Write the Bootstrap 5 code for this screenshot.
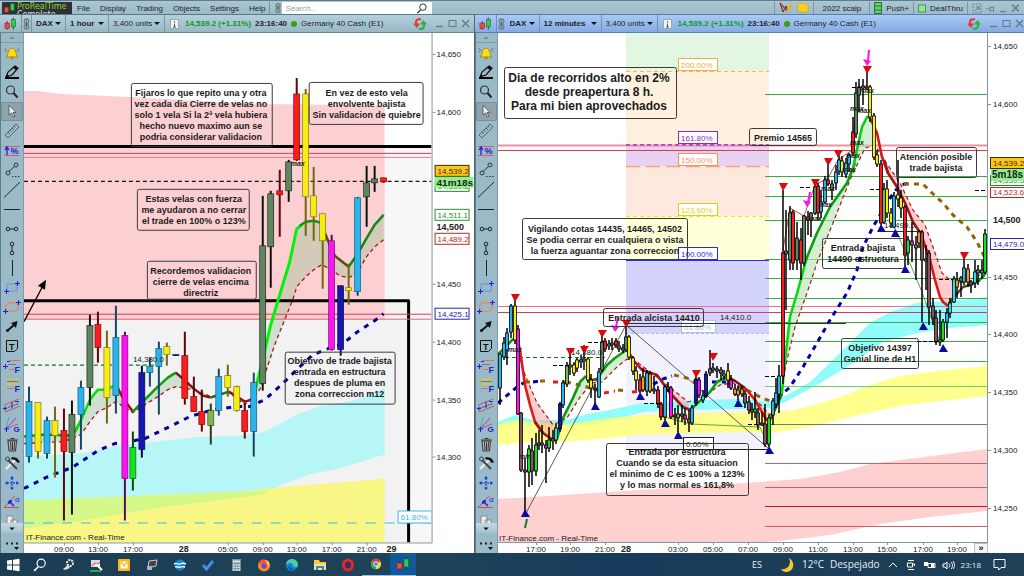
<!DOCTYPE html>
<html lang="es">
<head>
<meta charset="utf-8">
<meta name="viewport" content="width=device-width, initial-scale=1">
<title>ProRealTime</title>
<link href="https://cdn.jsdelivr.net/npm/bootstrap@5.3.0/dist/css/bootstrap.min.css" rel="stylesheet">
<style>
:root{--steel:#9fbdcb;--ink:#1d2429}
body{height:100vh;font:8px/10px "Liberation Sans",Arial,sans-serif;color:var(--ink);background:#fff;overflow:hidden}
button,select,input{font:inherit;color:inherit;border:0;background:none;padding:0;margin:0}
a{color:inherit;text-decoration:none}
svg{display:block}
.fit{min-height:0}
.appbar{height:14px;background:linear-gradient(#5f7d8b 0 1px,#a9c6d2 1px,#9dbbc8);padding-top:2px}
.appbar-brand{width:70px;height:12px;margin-left:2px;background:#2c3237;color:#8ed622;font:8px/9px "DejaVu Sans",sans-serif}
.brand-sub{color:#dfe6ea;line-height:8px}
.appbar nav{column-gap:10px;margin-left:5px}
.appbar nav a,.appbar-item{line-height:14px}
.vline{width:1px;align-self:stretch;background:#7995a3}
.search-box{width:150px;height:12px;background:#fff}
.search-box input{width:134px;height:12px;padding-left:3px;font-style:italic}
.search-box input::placeholder{color:#9a9a9a;opacity:1}
.win-left{flex:474 1 0}
.win-right{flex:550 1 0;border-left:1px solid #4d6573}
.titlebar{height:19px;background:linear-gradient(#b4d0dc,#98b7c5);border-bottom:1px solid #6d8794;border-top:1px solid #5d7683}
.win-right .titlebar{background:linear-gradient(#a9caf6,#86abe0);border-color:#5a7fae}
.win-right .vline{background:#6f92c4}
.info-mark{margin:0 5px}
.pick{appearance:none;height:17px;padding-left:4px;background:url("data:image/svg+xml,%3Csvg xmlns='http://www.w3.org/2000/svg' width='6' height='3'%3E%3Cpath d='M0 0h6L3 3z' fill='%23111'/%3E%3C/svg%3E") no-repeat right 4px center}
.pick-sym{width:33px}.pick-tf{width:42px}.pick-tf-wide{width:61px}.pick-units{width:55px}
.quote{color:#0b9a1c}
.dot-live{width:6px;height:6px;border-radius:50%;background:#3f9c10}
.tools{width:24px;background:#9bbac8;border-right:1px solid #7f9cab;border-left:1px solid #5f7a88}
.win-right .tools{width:23px}
.tools button{width:100%;min-height:0}
.tools .tool{flex:39 1 0}
.tools .tool-cut{flex:22 1 0;overflow:hidden}
.tools .tool-on{background:#8fa3ad;box-shadow:inset 0 0 0 1px #75909e;border-radius:2px}
.tools svg{width:18px;height:18px;margin:auto}
.tools .cap{height:10px;border-bottom:1px solid #7f9cab}
.tools .more{height:10px;background:linear-gradient(#c4d9e2,#a5c2cf)}
.tools .cap svg,.tools .more svg{height:9px}
.tools .dots{height:20px}
.chart{width:100%;height:100%}
.chart text{fill:#222;font-size:8px}
.chart .note text{font-size:9px;font-weight:700;text-anchor:middle;fill:#1c1c1c}
.chart .note-lg text{font-size:12px}
.chart .note rect{fill:none;stroke:#3b3b3b}
.chart .major{font-size:9px;font-weight:700}
.chart .mark-txt{font-style:italic;font-weight:700;font-size:7px;text-anchor:middle}
.chart .count{font-size:10px;font-weight:700}
.chart .mid{text-anchor:middle}
.taskbar{height:23px;background:linear-gradient(90deg,#1b3d54,#1f4459 40%,#173b5b 60%,#1f4055);color:#e8eef2;font:10px/23px "Open Sans",sans-serif}
.taskbar button{width:28px;height:23px}
.taskbar .start{width:26px}
.taskbar svg{margin-left:auto;margin-right:auto}
.taskbar .running{border-bottom:1px solid #8fc3ea}
.taskbar .active{width:26px;background:#0f5a9b;border-bottom:1px solid #8fc3ea}
.tray{padding-right:18px}
.tray .lang{font-size:9px;margin-right:18px}
.tray .near{margin-right:6px}
.tray .clock{font-size:8px;margin-right:12px}
</style>
</head>
<body class="d-flex flex-column">

<svg width="0" height="0" class="position-absolute" aria-hidden="true">
 <defs>
 <symbol id="candles" viewBox="0 0 14 14"><path d="M3.500 4v9M10 0v13" stroke="#333"/><rect x="1" y="6" width="5" height="6" fill="#e8494b" stroke="#8c2020" stroke-width=".6"/><rect x="8" y="2" width="4.500" height="8" fill="#36c94c" stroke="#176b23" stroke-width=".6"/></symbol>
 <symbol id="chain" viewBox="0 0 10 14"><g fill="none" stroke="#6e8087" stroke-width="1.600"><circle cx="5" cy="4" r="2.500"/><circle cx="5" cy="10" r="2.500"/></g><path d="M5 3v8" stroke="#55666d"/></symbol>
 <symbol id="info" viewBox="0 0 10 10"><rect x=".5" y=".5" width="8" height="9" fill="#f3f3f3" stroke="#9aa"/><path d="M4.500 2v1.500M4.500 4.500V8M3 8h3" stroke="#555"/></symbol>
 <symbol id="refresh" viewBox="0 0 14 14"><path d="M8 2.500C4 1 2 4 3.500 8" fill="none" stroke="#e8383b" stroke-width="2.200"/><path d="M0 6.500h7L4 11z" fill="#e8383b"/><path d="M6 11.500C10 13 12 10 10.500 6" fill="none" stroke="#27b53a" stroke-width="2.200"/><path d="M7 7.500h7L10.500 3z" fill="#27b53a"/></symbol>
 <symbol id="wmin" viewBox="0 0 9 9"><path d="M1 7.500h7" stroke="#5e7a88" stroke-width="1.300"/></symbol>
 <symbol id="wmax" viewBox="0 0 9 9"><rect x="1" y="1.500" width="7" height="6" fill="none" stroke="#5e7a88"/></symbol>
 <symbol id="wclose" viewBox="0 0 9 9"><path d="M1 1l7 7M8 1L1 8" stroke="#5e7a88" stroke-width="1.300"/></symbol>
 <symbol id="lens" viewBox="0 0 12 12"><circle cx="7" cy="4.500" r="3.500" fill="none" stroke="currentColor"/><path d="M4.500 7.500L1 11" stroke="currentColor" stroke-width="1.400"/></symbol>

 <symbol id="t-bell" viewBox="0 0 18 18"><path d="M3 13c3-2 1-8 6-9 5 1 3 7 6 9z" fill="#f7dc1b" stroke="#9c7b00" stroke-width=".8"/><circle cx="9" cy="14" r="1.500" fill="#b08c00"/><path d="M2 4l2 3M1.500 7l1 1M16 4l-2 3M16.500 7l-1 1" stroke="#66747a"/></symbol>
 <symbol id="t-pencil" viewBox="0 0 18 18"><path d="M3 14l2-5 7-6 3 2-6 7z" fill="none" stroke="#111" stroke-width="1.200"/><path d="M12 3l3 2-2 2-3-2zM3 14l1-3 2 2z" fill="#111"/><path d="M2 15h14" stroke="#000" stroke-width="2"/></symbol>
 <symbol id="t-zoom" viewBox="0 0 18 18"><circle cx="7.500" cy="7" r="4" fill="none" stroke="#333" stroke-width="1.200"/><path d="M10.500 10l4 4.500" stroke="#222" stroke-width="2"/></symbol>
 <symbol id="t-pointer" viewBox="0 0 18 18"><path d="M6 3v10l2.500-2 2 4 1.500-.8-2-3.700h3z" fill="#eee" stroke="#555" stroke-width=".9"/></symbol>
 <symbol id="t-ruler" viewBox="0 0 18 18"><path d="M2 13L13 2l3 3L5 16z" fill="none" stroke="#59666c"/><path d="M5 10l2 2M7 8l1.500 1.500M9 6l2 2M11 4l1.500 1.500" stroke="#59666c"/></symbol>
 <symbol id="t-pct" viewBox="0 0 18 18"><path d="M1 4.500h16M1 13.500h16" stroke="#e25960"/><path d="M4 13V6M2 8l2-3 2 3" stroke="#1a1fe0" fill="none" stroke-width="1.300"/><text x="7.500" y="12" font-size="9" font-weight="700" fill="#1a1fe0">%</text></symbol>
 <symbol id="t-segdot" viewBox="0 0 18 18"><g fill="none" stroke="#333"><circle cx="5" cy="12" r="2"/><circle cx="13" cy="4" r="2"/><path d="M6 10.500L11.500 5.500"/></g><path d="M9 15.500h8" stroke="#333" stroke-dasharray="1.500 1.500"/></symbol>
 <symbol id="t-slash" viewBox="0 0 18 18"><path d="M1 16.500L17 1" stroke="#222"/></symbol>
 <symbol id="t-hline" viewBox="0 0 18 18"><path d="M1 9.500h16" stroke="#222"/></symbol>
 <symbol id="t-hseg" viewBox="0 0 18 18"><g fill="none" stroke="#222"><circle cx="5" cy="9" r="1.800"/><circle cx="13" cy="9" r="1.800"/><path d="M7 9h4"/></g></symbol>
 <symbol id="t-vseg" viewBox="0 0 18 18"><g fill="none" stroke="#222"><circle cx="9" cy="5" r="1.800"/><circle cx="9" cy="14" r="1.800"/><path d="M9 7v5"/></g></symbol>
 <symbol id="t-vline" viewBox="0 0 18 18"><path d="M9.500 1v16" stroke="#222"/></symbol>
 <symbol id="t-rect" viewBox="0 0 18 18"><rect x="4" y="6" width="10" height="7" fill="none" stroke="#6d8fe0"/><path d="M1 13.500h5M3.500 11v5M12 5.500h5M14.500 3v5" stroke="#1a1fe0"/></symbol>
 <symbol id="t-ellipse" viewBox="0 0 18 18"><ellipse cx="9" cy="9" rx="6.500" ry="4.500" fill="none" stroke="#e08b5a" stroke-width="1.300"/><path d="M0 13.500h5M2.500 11v5M13 4.500h5M15.500 2v5" stroke="#1a1fe0"/></symbol>
 <symbol id="t-arrow" viewBox="0 0 18 18"><path d="M4 14l7-6" stroke="#111" stroke-width="2"/><path d="M14.500 4l-1.500 7-5-5z" fill="#111"/><circle cx="4.500" cy="13.500" r="1.500" fill="#111"/></symbol>
 <symbol id="t-text" viewBox="0 0 18 18"><path d="M3.500 3.500h11v8l-3 3h-8z" fill="none" stroke="#111"/><text x="6" y="12.500" font-size="9" font-weight="700" fill="#111">T</text></symbol>
 <symbol id="t-fib" viewBox="0 0 18 18"><path d="M6 3.500h11M6 12.500h5" stroke="#e66"/><path d="M5 7.500h8" stroke="#777"/><path d="M0 9.500h5M2.500 7v5M4 4.500h3" stroke="#1a1fe0"/><text x="11.500" y="16" font-size="9" font-weight="700" fill="#1a1fe0">F</text></symbol>
 <symbol id="t-fib2" viewBox="0 0 18 18"><path d="M4 3.500h11M4 8h11" stroke="#e3c33a" stroke-width="1.300"/><path d="M4 5.500h11" stroke="#777"/><path d="M4 12.500h7" stroke="#e66"/><text x="11.500" y="16" font-size="9" font-weight="700" fill="#1a1fe0">F</text></symbol>
 <symbol id="t-channel" viewBox="0 0 18 18"><path d="M1 9l15-6M2 16l15-6" stroke="#c55"/><path d="M2 12.500l14-5" stroke="#444" stroke-dasharray="2 1"/><path d="M0 12.500h4M2 10.500v4M9 6v6M12 5.500h4" stroke="#1a1fe0"/></symbol>
 <symbol id="t-gann" viewBox="0 0 18 18"><path d="M3 14L6 2" stroke="#5a9"/><path d="M3 14L13 3" stroke="#a3c"/><path d="M3 14l12-5" stroke="#c55"/><path d="M1 14h5M3.500 12v5" stroke="#1a1fe0"/><text x="10.500" y="16.500" font-size="8" font-weight="700" fill="#1a1fe0">G</text></symbol>
 <symbol id="t-trash" viewBox="0 0 18 18"><path d="M5 6h8.500l-1 10H6z" fill="#bbb" stroke="#333"/><path d="M4 5h11M7.500 3.500h4M7.500 7l.5 8M9.500 7v8M11.500 7L11 15" stroke="#333"/></symbol>
 <symbol id="t-wrench" viewBox="0 0 18 18"><path d="M3 15L12 6" stroke="#eee" stroke-width="2.400"/><path d="M9 3l5 1 3 4-2 1-3-3-4-1z" fill="#111"/><path d="M5 6l9 9" stroke="#444" stroke-width="2"/><circle cx="4.500" cy="5" r="2" fill="none" stroke="#444"/></symbol>
 <symbol id="t-move" viewBox="0 0 18 18"><path d="M9 4v10M4 9h10" stroke="#1d5ad0" stroke-dasharray="2 1" stroke-width="1.500"/><path d="M9 2l2 2.500H7zM9 16l2-2.500H7zM2 9l2.500-2v4zM16 9l-2.500-2v4z" fill="#1a2fe0"/></symbol>
 <symbol id="t-angle" viewBox="0 0 18 18"><path d="M16 14.500H1L12 3" fill="none" stroke="#d4494d"/><path d="M6 8l5 5M6 8v3M6 8h3" stroke="#1a1fe0" stroke-width="1.500"/><text x="12" y="9" font-size="8" fill="#1a1fe0">α</text></symbol>
 <symbol id="t-copy" viewBox="0 0 18 18"><path d="M4 4h6v9H4zM8 8h6v9H8z" fill="#eee" stroke="#888"/></symbol>
 </defs>
</svg>

<header class="appbar d-flex align-items-start overflow-hidden flex-shrink-0">
 <div class="appbar-brand d-flex overflow-hidden flex-shrink-0">
  <svg width="15" height="12" class="flex-shrink-0"><use href="#candles"/></svg>
  <div><div>ProRealTime</div><div class="brand-sub">Complete</div></div>
 </div>
 <nav class="d-flex"><a href="#">File</a><a href="#">Display</a><a href="#">Trading</a><a href="#">Objects</a><a href="#">Settings</a><a href="#">Help</a></nav>
 <div class="vline ms-1 me-1"></div>
 <svg width="8" height="12"><use href="#chain"/></svg>
 <label class="search-box d-flex align-items-center"><input type="text" placeholder="Search..." aria-label="Search"><svg width="12" height="11"><use href="#lens"/></svg></label>
 <div class="ms-auto d-flex align-self-stretch gap-1">
  <div class="vline"></div>
  <svg width="14" height="12" viewBox="0 0 14 12"><path d="M1 1l3 9 3-6 2 6" fill="none" stroke="#333"/><path d="M1 1l8 9" stroke="#e22" stroke-width="1.500"/><path d="M13 1l-5 9" stroke="#e8b62b" stroke-width="2.500"/></svg>
  <svg width="12" height="12" viewBox="0 0 12 12"><path d="M1 2c4-2 6 1 10 0v8c-4 1-6-1-10 0z" fill="#fc2" stroke="#c90" stroke-width=".5"/></svg>
  <div class="vline"></div><a href="#" class="appbar-item mx-1">2022 scalp</a><div class="vline"></div>
  <svg width="8" height="12" viewBox="0 0 8 12"><rect x=".5" y=".5" width="7" height="11" fill="#5fd06a" stroke="#247a30"/><path d="M0 4h8M0 8h8" stroke="#247a30"/></svg>
  <a href="#" class="appbar-item">Push+</a><div class="vline"></div>
  <svg width="8" height="12" viewBox="0 0 8 12"><rect x=".5" y="3" width="7" height="7" fill="#8de98a" stroke="#4a9650"/></svg>
  <a href="#" class="appbar-item">DealThru</a><div class="vline"></div>
  <svg width="10" height="12" viewBox="0 0 10 12"><rect x="1" y="2" width="8" height="9" fill="none" stroke="#6f8893" stroke-dasharray="2 1"/><path d="M3 9l4-4M4 5h3v3" stroke="#5c7580" fill="none"/></svg>
  <svg width="9" height="12" viewBox="0 0 9 12"><path d="M0 7h4M4 4v6M7.500 4v6M4 5.500h3.500v3H4" stroke="#6f8893" fill="none"/></svg>
  <svg width="8" height="14"><use href="#wmin"/></svg><svg width="9" height="12" class="me-1"><use href="#wclose"/></svg>
 </div>
</header>

<main class="d-flex flex-grow-1 fit">
 <section class="win-left d-flex flex-column" aria-label="DAX 1 hour">
  <div class="titlebar d-flex align-items-center flex-shrink-0">
   <svg width="13" height="14" class="mx-1 flex-shrink-0"><use href="#candles"/></svg><div class="vline"></div>
   <svg width="9" height="14"><use href="#chain"/></svg><div class="vline"></div>
   <select class="pick pick-sym fw-bold" aria-label="Symbol"><option>DAX</option></select><div class="vline"></div>
   <select class="pick pick-tf fw-bold" aria-label="Timeframe"><option>1 hour</option></select><div class="vline"></div>
   <select class="pick pick-units" aria-label="Units"><option>3,400 units</option></select><div class="vline"></div>
   <svg width="10" height="10" class="info-mark"><use href="#info"/></svg>
   <b class="quote">14,539.2 (+1.31%)</b><b class="ms-1">23:16:40</b><i class="dot-live mx-1"></i><span>Germany 40 Cash (E1)</span>
   <div class="ms-auto d-flex align-items-center gap-1 pe-1"><svg width="14" height="14" class="me-1"><use href="#refresh"/></svg>
   <button aria-label="Minimize"><svg width="9" height="9"><use href="#wmin"/></svg></button><button aria-label="Maximize"><svg width="9" height="9"><use href="#wmax"/></svg></button><button aria-label="Close"><svg width="9" height="9"><use href="#wclose"/></svg></button></div>
  </div>
  <div class="d-flex flex-grow-1 fit">
   <div class="tools d-flex flex-column flex-shrink-0"></div>
   <div class="flex-grow-1"><svg class="chart" id="chartA" viewBox="24 33 450 520" preserveAspectRatio="xMinYMin meet"></svg></div>
  </div>
 </section>
 <section class="win-right d-flex flex-column" aria-label="DAX 12 minutes">
  <div class="titlebar d-flex align-items-center flex-shrink-0">
   <svg width="13" height="14" class="mx-1 flex-shrink-0"><use href="#candles"/></svg><div class="vline"></div>
   <svg width="9" height="14"><use href="#chain"/></svg>
   <select class="pick pick-sym fw-bold" aria-label="Symbol"><option>DAX</option></select><div class="vline"></div>
   <select class="pick pick-tf-wide fw-bold" aria-label="Timeframe"><option>12 minutes</option></select><div class="vline"></div>
   <select class="pick pick-units" aria-label="Units"><option>3,400 units</option></select><div class="vline"></div>
   <svg width="10" height="10" class="info-mark"><use href="#info"/></svg>
   <b class="quote">14,539.2 (+1.31%)</b><b class="ms-1">23:16:40</b><i class="dot-live mx-1"></i><span>Germany 40 Cash (E1)</span>
   <div class="ms-auto d-flex align-items-center gap-1"><svg width="14" height="14" class="me-1"><use href="#refresh"/></svg>
   <button aria-label="Minimize"><svg width="9" height="9"><use href="#wmin"/></svg></button><button aria-label="Maximize"><svg width="9" height="9"><use href="#wmax"/></svg></button><button aria-label="Close"><svg width="9" height="9"><use href="#wclose"/></svg></button></div>
  </div>
  <div class="d-flex flex-grow-1 fit">
   <div class="tools d-flex flex-column flex-shrink-0"></div>
   <div class="flex-grow-1"><svg class="chart" id="chartB" viewBox="498 33 526 520" preserveAspectRatio="xMinYMin meet"></svg></div>
  </div>
 </section>
</main>

<footer class="taskbar d-flex align-items-center flex-shrink-0">
 <button class="start" aria-label="Start"><svg width="14" height="14" viewBox="0 0 14 14"><path d="M1 2.500l5-.7v4.700H1zM7 1.700l6.500-1v5.800H7zM1 7.500h5v4.700l-5-.7zM7 7.500h6.500v5.800L7 12.300z" fill="#fff"/></svg></button>
 <button aria-label="Search"><svg width="14" height="14" class="text-white"><use href="#lens"/></svg></button>
 <button aria-label="Settings"><svg width="14" height="14" viewBox="0 0 14 14"><circle cx="9" cy="5" r="3" fill="none" stroke="#eee" stroke-width="2" stroke-dasharray="2 1"/><path d="M2 11l5-4 2 3-5 2z" fill="#ddd"/></svg></button>
 <button aria-label="Tools"><svg width="14" height="14" viewBox="0 0 14 14"><path d="M2 2h9v7H2z" fill="#dde"/><path d="M3 8c3-6 5 0 8-4" stroke="#d33" fill="none"/><path d="M7 6l6 6" stroke="#fff" stroke-width="2"/><path d="M1 13h11" stroke="#25b531" stroke-width="2"/></svg></button>
 <button aria-label="Mail"><svg width="14" height="14" viewBox="0 0 14 14"><rect x="1" y="1" width="12" height="12" rx="1" fill="#fdb813"/><path d="M3.500 3.500h7v7h-7z" fill="#fff"/><path d="M4 4l4 4.500M10 4L7 8" stroke="#fdb813" stroke-width="1.200"/></svg></button>
 <button aria-label="Photos"><svg width="14" height="14" viewBox="0 0 14 14"><path d="M4 3l8-1-1 6-8 2z" fill="#444" stroke="#ccc"/><path d="M2 8h5v4H2z" fill="#b9a6c8"/></svg></button>
 <button aria-label="OpenOffice"><svg width="14" height="14" viewBox="0 0 14 14"><circle cx="7" cy="7" r="5.500" fill="#1583cf"/><path d="M1 6c3-2 4 1 6 0s4-1 6 0M2 9c3-1 4 1 6 0s3 0 4 0" stroke="#fff" fill="none" stroke-width="1.300"/></svg></button>
 <button aria-label="Tasks"><svg width="14" height="14" viewBox="0 0 14 14"><path d="M2 7l3.500 4L12 3" fill="none" stroke="#3f8fe8" stroke-width="3"/></svg></button>
 <button aria-label="Calculator"><svg width="14" height="14" viewBox="0 0 14 14"><rect x="3" y="1" width="9" height="12" fill="#7a8f9c"/><path d="M4 3.500h7" stroke="#cfe6f4" stroke-width="2"/><path d="M4 7h7M4 9.500h7M4 12h7" stroke="#dfe8ee" stroke-dasharray="1.800 .8" stroke-width="1.500"/></svg></button>
 <button aria-label="Firefox"><svg width="14" height="14" viewBox="0 0 14 14"><circle cx="7" cy="7.500" r="6" fill="#ff8a1e"/><path d="M1 6c2-4 3-3 4-5 1 2 7 1 8 6-1-1-2-3-4-2z" fill="#ff4f3a"/><circle cx="7" cy="8" r="2.700" fill="#7b43d6"/><path d="M9 2c3 1 4 4 3 7-1-3-2-3-3-7" fill="#ffd43a"/></svg></button>
 <button aria-label="Edge"><svg width="14" height="14" viewBox="0 0 14 14"><circle cx="7" cy="7" r="6" fill="#1787d8"/><path d="M1 7c0-8 12-8 12 0 0 3-5 2-5 0 0-3-5-3-7 0z" fill="#43d1a0"/><path d="M5 7c0 4 4 5 7 3-2 4-8 3-9-1z" fill="#0b5aa8"/></svg></button>
 <button aria-label="Explorer"><svg width="14" height="14" viewBox="0 0 14 14"><path d="M1 2h5l1 2h6v8H1z" fill="#f9c940"/><path d="M1 6h12v6H1z" fill="#fde08a"/><path d="M3 8h8v4H9v-2H5v2H3z" fill="#2b8ad4"/></svg></button>
 <button aria-label="Opera"><svg width="14" height="14" viewBox="0 0 14 14"><ellipse cx="7" cy="7" rx="4.500" ry="5" fill="#1b3d54" stroke="#f0202c" stroke-width="3"/></svg></button>
 <button class="running" aria-label="Chrome"><svg width="12" height="12" viewBox="0 0 14 14"><circle cx="7" cy="7" r="6" fill="#ffcd42"/><path d="M7 7L1.800 4A6 6 0 0 1 12.200 4z" fill="#e33b2e"/><path d="M7 7v6A6 6 0 0 1 1.800 4z" fill="#2fa24c"/><circle cx="7" cy="7" r="2.700" fill="#3f80ee" stroke="#fff"/></svg></button>
 <button class="active" aria-label="ProRealTime"><svg width="14" height="14"><use href="#candles"/></svg></button>
 <div class="tray ms-auto d-flex align-items-center">
  <span class="lang">ES</span>
  <div class="near"><svg width="16" height="16" viewBox="0 0 16 16"><path d="M9 1c7 4 5 14-3 14-2 0-4-1-5-3 6 1 11-4 8-11z" fill="#fcc42f"/></svg></div>
  <span class="near">12°C</span><span class="me-2">Despejado</span>
  <div class="me-2"><svg width="10" height="8" viewBox="0 0 10 8"><path d="M1 6l4-4 4 4" fill="none" stroke="#fff"/></svg></div>
  <div class="me-2"><svg width="10" height="12" viewBox="0 0 10 12"><path d="M2 1.500h6M2 10.500h6M1.500 4h5v4h-5zM6.500 5h2v2" fill="none" stroke="#fff"/></svg></div>
  <div class="near"><svg width="12" height="10" viewBox="0 0 12 10"><path d="M4 3.500h7v4H4z" fill="none" stroke="#fff"/><path d="M0 2h4v4H0zM7 4h3v3H7z" fill="#fff"/></svg></div>
  <div class="near"><svg width="13" height="10" viewBox="0 0 13 10"><path d="M1 4h2l2-2v7L3 7H1zM7 3.500c1 1 1 3 0 4M9 2c2 2 2 5 0 7M11 1c2 3 2 6 0 8" fill="none" stroke="#fff"/></svg></div>
  <time class="clock">23:18</time>
  <svg width="13" height="13" viewBox="0 0 13 13"><path d="M1 1.500h11v8H8L6 12 5 9.500H1z" fill="none" stroke="#fff"/></svg>
 </div>
</footer>

<script src="https://cdn.jsdelivr.net/npm/bootstrap@5.3.0/dist/js/bootstrap.bundle.min.js"></script>
<script>
/* drawing tool strips */
const TOOLS = 'bell pencil zoom pointer ruler pct segdot slash hline hseg vseg vline rect ellipse arrow text fib fib2 channel gann trash wrench move angle copy'.split(' ');
document.querySelectorAll('.tools').forEach(bar => {
  bar.innerHTML = '<button class="cap" aria-label="Scroll up"><svg viewBox="0 0 18 10"><path d="M6 6.500L9 4l3 2.500z" fill="#6d8390"/></svg></button>' +
    TOOLS.map(t => `<button class="${t === 'copy' ? 'tool-cut' : 'tool'}${t === 'pointer' ? ' tool-on' : ''}" aria-label="${t}"><svg><use href="#t-${t}"/></svg></button>`).join('') +
    '<button class="more" aria-label="Scroll down"><svg viewBox="0 0 18 10"><path d="M6 4h6L9 7z" fill="#111"/></svg></button>' +
    '<button class="dots" aria-label="More"><svg viewBox="0 0 18 18"><path d="M3 9.500h12" stroke="#222" stroke-width="2" stroke-dasharray="2 3"/><path d="M11 13h5l-2.500 3z" fill="#111"/></svg></button>';
});

/* drawing helpers */
const poly = (pts, fill, o = 1) => `<polygon points="${pts}" fill="${fill}" opacity="${o}"/>`;
const path = (pts, c, w = 1, d = '') => `<polyline points="${pts}" fill="none" stroke="${c}" stroke-width="${w}" stroke-linejoin="round" ${d ? `stroke-dasharray="${d}"` : ''}/>`;
const hl = (x1, x2, y, c, w = 1, d = '') => path(`${x1},${y} ${x2},${y}`, c, w, d);
const rect = (x, y, w, h, f, s = 'none') => `<rect x="${x}" y="${y}" width="${w}" height="${h}" fill="${f}" stroke="${s}"/>`;
const txt = (x, y, s, cls = '', fill = '') => `<text x="${x}" y="${y}" class="${cls}" ${fill ? `style="fill:${fill}"` : ''}>${s}</text>`;
const tag = (x, y, w, h, s, c, bg = '#fff') => rect(x + .5, y + .5, w, h, bg, c) + txt(x + 3, y + h - 2, s, '', c);
const note = (x, y, w, h, cx, base, lines, step = 11, cls = '') =>
  `<g class="note ${cls}"><rect x="${x + .5}" y="${y + .5}" width="${w}" height="${h}" rx="2"/>${lines.map((l, i) => `<text x="${cx}" y="${base + i * step}">${l}</text>`).join('')}</g>`;
const COL = { b: ['#29b4ec', '#0f4a66'], y: ['#f6ee10', '#6f6a10'], r: ['#fb1c1c', '#5d0808'], d: ['#5f8562', '#0c150c'], m: ['#fb14f0', '#5e085c'],
  g: ['#14e41c', '#0a4a0c'], n: ['#1616b0', '#06063c'], l: ['#7db84a', '#26401a'], w: ['#8a5560', '#000'], o: ['#f39a1c', '#000'], c: ['#18e4f4', '#000'] };
/* candle records: x colour bodyTop bodyBottom wickTop wickBottom */
const candles = (s, w, wick, mono) => s.trim().split(/\s*;\s*/).filter(Boolean).map(r => {
  const [x, k, t, b, wt, wb] = r.split(' '), [f, dk] = COL[k];
  return path(`${x},${wt} ${x},${wb}`, mono ? '#000' : dk, wick) +
    `<rect x="${x - w / 2}" y="${t}" width="${w}" height="${Math.max(1, b - t)}" fill="${f}" stroke="${mono ? '#000' : dk}" stroke-width="${mono ? .8 : .6}"/>`;
}).join('');

/* 1 hour chart */
let a = rect(24, 33, 408, 510, '#fff') + rect(24, 147, 408, 396, '#f7f7f7') + rect(24, 301, 385, 242, '#f2f2f2');
a += poly('24,91 38,91 62,94 130,97 200,101 260,104 345,105 385,106 385,320 24,320', '#fcd0d2');
a += poly('24,457 80,454 120,446 150,443 190,438 240,436 262,433 283,423 297,415 320,407 350,402 370,396 385,388 385,455 340,469 310,475 285,484 265,494 240,498 160,508 90,520 24,529', '#b6f6f6');
a += poly('24,501 100,498 240,492 300,486 340,483 385,479 385,543 24,543', '#f8f684');
a += poly('24,501 100,498 240,492 270,491 262,495 240,498 160,508 90,520 24,529', '#d4f888');
a += hl(24, 432, 523.5, '#40b8e8', 1, '10 9');
const aFast = '24,437 45,435 68,436 75,432 81,421 90,400 98,390 107,390 116,385 124,400 133,412 145,400 158,387 168,378 176,373 184,380 194,389 203,396 211,398 220,395 229,392 237,397 245,402 252,400 256,388 263,360 271,325 283,285 290,262 297,229 306,222 314,221 321,223 330,245 335,256 349,267 358,254 366,240 375,225 384,215';
const aSlow = '24,444 64,442 81,435 90,422 98,412 107,408 116,402 133,413 145,405 158,397 168,390 176,387 194,390 211,397 229,393 245,405 260,390 266,372 275,345 285,320 293,300 297,287 306,277 314,270 322,265 332,270 340,276 349,278 358,273 366,258 375,247 384,240';
a += poly(aFast + ' ' + aSlow.split(' ').reverse().join(' '), '#8cc08c', .35);
a += hl(24, 432, 146.5, '#000', 3) + hl(24, 432, 153.5, '#d83a58') + hl(24, 432, 157.5, '#e87a8c') + hl(24, 432, 181.5, '#111', 1.4, '4 3');
a += path('24,301 409,301 409,543', '#000', 3) + hl(24, 432, 314.5, '#d83a58') + hl(24, 432, 319.5, '#e0657c') + hl(24, 164, 365.5, '#0a7d14', 1.4, '4 3');
a += path('24,322 43,286', '#000', 1.3) + poly('46,280 45,290 38,286', '#000');
a += path(aSlow, '#a31818', 1.3, '4 3');
a += path('24,489 48,477 72,468 98,451 115,444 124,443 145,439 170,427 190,417 210,411 235,407 250,407 265,400 283,384 297,370 312,356 325,350 342,345 358,332 375,321 384,314', '#00009c', 3, '5 6');
a += path('24,437 45,435 68,436 75,432 81,421', '#109c14', 2.5) + path('75,432 81,421 90,400 98,390 107,390 116,385', '#06e20a', 2.5) + path('116,385 124,400 133,412', '#a00c18', 2.5) +
  path('133,412 145,400 158,387 168,378 176,373', '#0e9c14', 2.5) + path('176,373 184,380 194,389 203,396 211,398', '#7c1414', 2.5) + path('211,398 220,395 229,392', '#16761a', 2.5) + path('229,392 237,397 245,402 252,400', '#8c1414', 2.5) +
  path('254,396 258,380 263,360 271,325 283,285 290,262 297,229 302,225', '#06f00a', 3) + path('300,226 306,222 314,221 321,223', '#0e9414', 2.5) + path('321,223 330,245 335,256 349,267', '#5a4a10', 2.5) + path('349,267 358,254 366,240 375,225 384,215', '#0e8a14', 2.5);
a += candles(`29 b 402 457 387 463;38 y 403 452 403 459;47 b 421 454 417 459;55 y 421 436 407 478;64 r 431 452 409 521;72 d 415 453 401 515;81 b 388 415 381 450;90 d 326 388 315 406;98 r 325 348 312 363;107 y 348 398 331 424;116 b 338 396 306 414;125 m 336 479 332 521;133 g 448 479 432 491;142 n 373 450 366 458;150 b 367 373 358 387;159 b 349 367 342 415;167 y 347 355 343 366;176 n 355 356 355 356;185 r 356 399 332 405;194 r 397 412 377 412;202 r 412 425 390 432;211 l 411 426 404 445;219 b 377 411 369 416;228 y 376 388 365 397;237 y 387 411 386 412;245 r 411 432 403 439;254 b 383 432 373 457;263 d 246 384 196 391;271 d 194 247 191 288;280 r 191 195 170 237;289 d 162 191 160 202;297 r 94 160 78 161;306 y 94 197 89 236;314 y 196 217 167 241;323 y 214 241 214 289;332 m 241 350 235 351;341 n 286 350 286 356;349 y 288 291 264 305;358 b 198 292 197 296;367 d 183 197 166 227;375 d 179 183 166 192;384 r 178 182 178 183`, 6, 2);
a += txt(133, 362, '14,380.0') + txt(298, 166, 'max', 'mark-txt');
a += note(131, 83, 141, 63, 201, 96, ['Fijaros lo que repito una y otra', 'vez cada dia Cierre de velas no', 'solo 1 vela Si la 2ª vela hubiera', 'hecho nuevo maximo aun se', 'podria considerar validacion']) +
  note(309, 82, 114, 42, 367, 96, ['En vez de esto vela', 'envolvente bajista', 'Sin validacion de quiebre']) +
  note(137, 189, 112, 41, 194, 202, ['Estas velas con fuerza', 'me ayudaron a no cerrar', 'el trade en 100% o 123%']) +
  note(147, 261, 109, 38, 201, 274, ['Recordemos validacion', 'cierre de velas encima', 'directriz']) +
  note(285, 352, 110, 52, 340, 364, ['Objetivo de trade bajista', 'entrada en estructura', 'despues de pluma en', 'zona correccion m12']);
a += tag(398, 511, 34, 12, '61.80%', '#40b8e8') + txt(26, 541, 'IT-Finance.com - Real-Time');
a += rect(432, 33, 42, 520, '#fff') + rect(24, 543, 408, 10, '#fff') + path('432.5,33 432.5,543.5 24,543.5', '#8496a2');
a += [[54, '650'], [112, '600'], [284, '450'], [342, '400'], [400, '350'], [457, '300']].map(([y, s]) => hl(433, 436, y + .5, '#8496a2') + txt(437, y + 3, '14,' + s)).join('') + txt(437, 230, '14,500', 'major');
a += tag(435, 181, 34, 10, '14,530.2', '#1c8a22') + tag(435, 165, 34, 11, '14,539.2', '#3a3000', '#fcc61c') + rect(435, 177, 39, 11, '#8ff08c') + txt(437, 186, '41m18s', 'count') +
  tag(435, 209, 34, 11, '14,511.1', '#2a9430') + tag(435, 233, 34, 11, '14,489.2', '#b42a2a') + tag(435, 308, 34, 11, '14,425.1', '#2626b4');
a += [[64, '09:00'], [98, '13:00'], [133, '17:00'], [228, '05:00'], [263, '09:00'], [297, '13:00'], [332, '17:00'], [367, '21:00']].map(([x, s]) => path(`${x + .5},543 ${x + .5},546`, '#8496a2') + txt(x, 553, s, 'mid')).join('') + txt(184, 553, '28', 'mid major') + txt(392, 553, '29', 'mid major');
document.getElementById('chartA').innerHTML = a;

/* 12 minute chart */
let b = rect(498, 33, 489, 510, '#fff');
b += poly('498,499 580,494 640,490 700,486 760,482 800,479 840,472 870,464 900,460 940,455 987,449 987,511 930,517 880,524 830,535 780,541 750,543 498,543', '#ffd0d0');
b += [[33, 71, '#e2f6e2'], [71, 145, '#fff1de'], [145, 166, '#e8d2f4'], [166, 216, '#ffe8de'], [216, 260, '#ffffd8'], [260, 333, '#d3d3fd'], [333, 449, '#f2f2fe']].map(([y, e, c]) => rect(626, y, 143, e - y, c)).join('');
b += poly('498,422 515,415 533,420 567,420 587,414 610,410 643,403 677,402 703,400 737,399 760,401 775,402 783,397 810,382 840,353 870,323 890,312 917,303 963,300 987,297 987,325 950,328 917,333 883,342 850,365 817,385 783,403 770,408 737,409 677,410 643,412 610,421 587,426 567,425 533,427 515,422 498,428', '#90fcfc');
b += poly('498,424 515,420 533,422 567,424 610,418 643,415 700,413 760,412 787,411 810,406 840,397 870,385 900,376 930,372 987,366 987,396 940,401 900,406 850,417 810,427 770,433 750,432 700,433 640,435 600,439 560,442 530,442 498,445', '#ffff70', .8);
b += hl(626, 769, 71.5, '#f8b84c', 1, '4 3') + hl(626, 769, 145, '#8c28cc', 1.5, '4 3') + hl(626, 769, 166.5, '#ffa070', 1.5, '14 6') + hl(626, 769, 216.5, '#f0ec20', 1, '4 3') + hl(626, 769, 260.500, '#2a2af0') + hl(626, 769, 333.5, '#b8b8f0', 1, '3 2') + hl(626, 769, 449.5, '#222');
b += hl(498, 987, 145.5, '#f090a4', 2) + hl(626, 769, 145, '#8c28cc', 1, '4 3') + hl(498, 987, 150.5, '#d83a58') + hl(498, 987, 306.5, '#e8708a') + hl(498, 987, 312.5, '#d83a58') + hl(626, 846, 323.5, '#333') + hl(498, 605, 357.5, '#0a7d14', 1.2, '4 3');
b += [94, 176, 196, 220, 259, 278, 298, 322, 341, 361, 386].map(y => hl(765, 987, y + .5, y === 386 ? '#6cd070' : '#3aac40')).join('') + hl(765, 987, 424.5, '#777') + [463, 487, 506, 526].map(y => hl(765, 987, y + .5, y === 506 ? '#b41c24' : '#cc6068')).join('');
const gUp = ['555,440 563,418 573,398 580,382 586,376 592,383 580,397 567,418', '598,378 607,365 615,358 627,351 627,359 617,367 602,382', '692,410 700,401 717,382 727,377 733,383 720,385 703,397', '777,407 783,387 790,317 798,290 807,257 817,233 830,207 847,183 855,163 862,127 867,117 872,120 872,145 865,148 850,180 833,223 818,260 808,290 795,327 787,360 782,387'];
const gDn = ['517,338 525,385 535,422 543,433 555,440 556,427 537,403 523,370', '630,353 642,370 657,375 670,393 683,407 690,410 688,402 677,393 657,377 637,362', '733,380 745,388 755,400 767,421 770,415 758,402 747,390', '877,133 882,157 888,173 897,187 905,203 913,222 923,237 930,260 935,280 943,302 948,306 953,298 955,281 942,273 933,247 925,225 913,210 900,183 883,158'];
b += gUp.map(p => poly(p, '#b4e4b4', .6)).join('') + gDn.map(p => poly(p, '#ff9c9c', .5)).join('');
b += path('525,515 626,325 769,449', '#333', .8) + path('895,228 922,292 940,342', '#2a942e', .8) + path('665,417 690,424 760,427 769,447', '#2a942e', .8) + path('880,231.500 923,231.500', '#333') +
  path('783,250 790,208 804,216 815,185 828,178 838,160 852,150 858,90 867,85', '#b02020', .8);
b += path('517,345 523,370 537,403 553,425 567,418 580,397 592,383 602,382 617,367 627,359 637,362 657,377 677,393 688,402 703,397 720,385 733,383 747,390 758,402 770,415 782,387 787,360 795,327 808,290 818,260 833,223 850,180 865,148 875,145 883,158 900,183 913,210 925,225 933,247 942,273 950,280 963,283 980,275', '#a01c1c', 1.2, '4 3');
const LONG = [['498,403 517,387 525,382', '#00009c'], ['525,382 533,382', '#956200'], ['533,382 540,381', '#00009c'], ['540,381 550,381', '#956200'], ['553,382 566,382', '#e01c1c'], ['566,382 584,386 600,391', '#956200'], ['604,393 615,391', '#e01c1c'], ['618,390 628,391', '#956200'], ['632,392 642,391', '#e01c1c'], ['645,390 660,380 672,376', '#00009c'], ['674,375 687,378 700,385', '#956200'], ['712,382 726,382', '#00009c'], ['728,383 747,390 758,396 770,401', '#956200'], ['778,398 790,387 803,367 817,343 830,320 847,293 857,270 863,247 873,227 883,210 892,195 900,185 910,183', '#00009c'], ['904,184 923,184 932,193 943,203 953,215 967,227 977,242 984,256', '#956200']];
b += LONG.map(([p, c]) => path(p, c, 3, '5 5')).join('');
b += [['498,354 505,348 512,340 517,338', '#0e9414'], ['517,338 520,350 525,385 530,405 535,422 543,433', '#e01818'], ['535,422 543,433 553,440 557,439', '#9c1414'], ['557,439 563,418 573,398 580,382 586,376', '#0e9414'], ['586,376 592,380 597,379', '#5a4a10'], ['597,379 607,365 615,358 625,351', '#0e9c14'], ['628,351 633,360 642,370 657,375 670,393 683,407 690,410', '#a81414'], ['690,410 700,401 710,392 717,382 727,377', '#0e9c14'], ['727,377 735,381 745,388', '#7c1414'], ['745,388 755,400 762,412 767,421', '#e01818'], ['770,420 777,405 782,394', '#2a6a14'], ['782,394 784,370 790,317 798,290 807,257', '#06dc0a'], ['805,262 817,233 830,207 847,183 855,163', '#0e9c14'], ['853,168 858,145 862,127 867,117 870,118', '#06d00a'], ['870,118 877,133 882,157 888,173', '#d81818'], ['884,160 888,173 897,187 905,203 913,222 923,237', '#a41414'], ['921,234 930,260 935,280 940,297 943,302 948,306', '#e01414'], ['948,306 953,298 963,287 970,285 980,280', '#5a4a10'], ['978,281 983,277 986,272', '#0e9c14']].map(([p, c]) => path(p, c, 2.6)).join('');
b += candles(`500 b 354 388 353 405;504 b 343 357 337 360;507 b 333 350 328 365;511 b 306 332 304 338;515 y 306 340 300 344;518 m 329 414 325 415;521 w 413 470 412 472;525 w 470 472 458 512;529 g 449 472 445 487;532 w 451 471 438 485;536 g 445 471 433 476;539 w 443 445 430 450;542 w 443 445 425 453;546 m 445 448 440 483;549 g 440 448 427 452;553 g 439 441 430 450;556 c 428 440 424 444;560 n 404 429 402 432;563 b 383 405 380 408;567 l 366 384 362 387;570 d 365 367 353 375;574 y 365 373 362 376;577 y 360 368 358 372;581 b 360 362 355 368;584 g 359 361 345 370;588 y 359 380 357 383;591 y 380 388 374 398;595 w 388 390 384 405;599 b 372 397 368 398;602 d 342 370 335 372;605 r 341 349 338 352;609 b 344 346 340 350;612 d 343 345 338 350;616 r 341 345 338 348;619 d 346 349 341 352;623 d 348 350 344 353;626 d 337 350 325 352;629 y 337 357 335 360;633 y 358 371 356 375;636 y 371 380 366 390;640 r 380 391 374 393;643 o 377 390 368 392;647 b 373 391 370 396;650 o 374 391 371 393;654 d 389 391 376 394;658 r 390 404 386 408;661 r 404 417 402 420;665 b 387 417 385 420;668 d 387 389 382 392;671 m 388 417 386 419;675 r 415 417 408 425;678 g 414 418 405 432;682 d 414 416 405 422;685 m 415 419 408 425;689 w 419 422 410 432;692 b 408 423 405 425;696 n 379 403 375 406;699 m 380 395 377 398;703 c 396 400 390 403;706 n 374 396 371 398;710 d 369 373 350 376;713 d 368 370 363 373;717 d 369 371 366 378;721 d 370 373 367 380;724 c 374 376 370 380;728 y 371 380 363 388;731 m 380 388 375 390;735 o 389 394 384 396;738 o 390 395 386 400;742 o 389 394 386 397;745 w 394 403 390 408;749 w 402 410 396 414;752 d 410 412 403 420;755 g 409 412 392 418;758 w 413 425 408 430;762 w 423 425 412 426;765 w 424 444 404 447;769 g 418 444 415 447;773 b 401 415 398 425;776 b 393 404 378 408;779 b 376 394 365 413;783 r 253 376 190 384;786 w 251 254 210 310;790 d 213 260 206 270;793 r 212 263 210 270;797 d 238 260 222 270;801 r 240 263 228 280;804 d 216 263 215 266;808 r 217 220 211 235;811 d 213 220 212 237;815 d 187 213 180 215;818 r 186 213 183 220;821 b 202 212 190 218;825 b 180 202 176 204;828 r 180 184 160 186;832 d 184 190 180 200;836 b 172 183 165 190;839 b 160 171 155 175;842 y 161 172 156 177;846 b 163 174 158 178;849 b 155 164 153 172;853 r 132 153 117 156;856 d 93 134 82 138;859 d 87 95 79 112;863 d 86 88 79 105;867 r 87 89 72 90;870 y 87 117 85 122;874 y 116 157 113 160;877 y 155 164 150 167;881 r 164 223 160 225;884 l 189 222 183 224;887 y 189 213 180 218;891 y 213 223 208 228;894 b 196 227 192 228;898 y 195 199 160 207;901 y 198 208 190 218;905 r 207 255 205 270;908 g 240 253 236 265;912 m 241 245 222 262;916 d 245 248 236 280;919 o 232 243 230 248;922 w 232 260 230 322;926 w 259 261 245 290;929 w 253 307 250 325;933 w 306 318 298 325;936 w 318 342 310 345;940 g 340 342 310 346;943 g 322 340 319 342;947 b 313 322 308 338;950 c 303 313 298 318;954 c 279 302 276 303;957 o 280 287 272 298;961 d 278 281 276 297;964 b 268 282 258 285;968 o 269 282 264 287;971 w 282 285 280 293;975 c 272 283 260 288;978 d 270 273 265 285;982 d 270 273 260 279;985 g 234 272 229 274`, 3, 1.5, true);
b += [[800, 812, 187], [870, 884, 189], [939, 953, 279], [917, 937, 341], [588, 602, 342], [553, 570, 365], [644, 660, 403], [748, 760, 424], [765, 777, 376], [975, 987, 190], [852, 862, 87]].map(([x, e, y]) => hl(x, e, y + .5, '#000', 1, '4 2')).join('');
b += [[515, 294], [570, 348], [584, 346], [602, 330], [626, 320], [696, 370], [713, 353], [783, 183], [815, 179], [828, 158], [838, 150], [867, 66], [964, 252]].map(([x, y]) => poly(`${x - 4},${y} ${x + 5},${y} ${x},${y + 8}`, '#dc0a0a')).join('');
b += [[525, 509], [595, 402], [640, 392], [665, 419], [678, 431], [738, 399], [769, 446], [923, 322], [943, 344], [881, 224], [895, 229], [905, 265]].map(([x, y]) => poly(`${x - 4},${y + 8} ${x + 5},${y + 8} ${x},${y}`, '#0c0c9c')).join('');
b += [[869, 50, 867, 66], [810, 192, 807, 207], [618, 317, 615, 332]].map(([x, y, p, q]) => path(`${x},${y} ${p + 1},${q - 5}`, '#fb14f0', 2) + poly(`${p - 4},${q - 7} ${p + 4},${q - 5} ${p},${q}`, '#fb14f0')).join('') + path('525,528 527,519', '#0c7c3c', 2);
b += [[867, 93], [857, 111], [864, 113], [857, 145], [853, 158], [849, 172], [828, 191], [825, 207], [815, 221], [515, 352]].map(([x, y]) => txt(x, y, 'max', 'mark-txt')).join('') + txt(525, 459, 'min', 'mark-txt');
b += txt(571, 355, '14,380.0') + txt(720, 320, '14,410.0') + txt(884, 228, '14,490.0');
b += tag(678, 58, 39, 12, '200.00%', '#f4ac40') + tag(678, 131, 39, 12, '161.80%', '#8c28cc') + tag(678, 153, 39, 12, '150.00%', '#ff8a5c') + tag(678, 203, 39, 12, '123.60%', '#d8d414') + tag(678, 247, 39, 12, '100.00%', '#2a2af0') + tag(681, 320, 34, 12, '61.80%', '#a8c0ec') + hl(626, 846, 323.5, '#333') + tag(683, 437, 30, 12, '0.00%', '#222');
b += note(504, 67, 172, 51, 589, 82, ['Dia de recorridos alto en 2%', 'desde preapertura 8 h.', 'Para mi bien aprovechados'], 14, 'note-lg') +
  note(749, 128, 67, 17, 783, 141, ['Premio 14565']) +
  note(522, 218, 165, 41, 605, 232, ['Vigilando cotas 14435, 14465, 14502', 'Se podia cerrar en cualquiera o vista', 'la fuerza aguantar zona correccion']) +
  note(896, 147, 80, 30, 936, 160, ['Atención posible', 'trade bajista']) +
  note(822, 238, 82, 30, 863, 251, ['Entrada bajista', '14490 estructura']) +
  note(841, 338, 77, 30, 880, 351, ['Objetivo 14397', 'Genial line de H1']) +
  note(603, 308, 100, 18, 654, 321, ['Entrada alcista 14410']) +
  note(606, 443, 142, 52, 677, 455, ['Entrada por estructura', 'Cuando se da esta situacion', 'el minimo de C es 100% a 123%', 'y lo mas normal es 161,8%']);
b += txt(499, 541, 'IT-Finance.com - Real-Time');
b += rect(987, 33, 37, 520, '#fff') + rect(498, 543, 489, 10, '#fff') + path('987.500,33 987.500,542.500 498,542.500', '#8496a2');
b += [[46, '650'], [104, '600'], [277, '450'], [334, '400'], [392, '350'], [450, '300'], [508, '250']].map(([y, s]) => hl(988, 991, y + .5, '#8496a2') + txt(993, y + 3, '14,' + s)).join('') + txt(993, 223, '14,500', 'major');
b += tag(990, 175, 36, 10, '14,530.3', '#1c8a22') + tag(990, 157, 36, 11, '14,539.2', '#3a3000', '#fcc61c') + rect(991, 169, 33, 12, '#8ff08c') + txt(992, 178, '5m18s', 'count') + tag(990, 187, 36, 10, '14,523.6', '#b42a2a') + tag(990, 238, 36, 11, '14,479.0', '#2626b4');
b += [[536, '17:00'], [570, '19:00'], [605, '21:00'], [678, '03:00'], [713, '05:00'], [748, '07:00'], [783, '09:00'], [818, '11:00'], [853, '13:00'], [887, '15:00'], [923, '17:00'], [957, '19:00']].map(([x, s]) => path(`${x + .5},543 ${x + .5},545`, '#8496a2') + txt(x, 552, s, 'mid')).join('') + txt(626, 552, '28', 'mid major');
b += rect(974.5, 543.5, 13, 12, '#f3f5f6', '#b4c0c8') + txt(981, 551, '»', 'mid major');
document.getElementById('chartB').innerHTML = b;
</script>
</body>
</html>
